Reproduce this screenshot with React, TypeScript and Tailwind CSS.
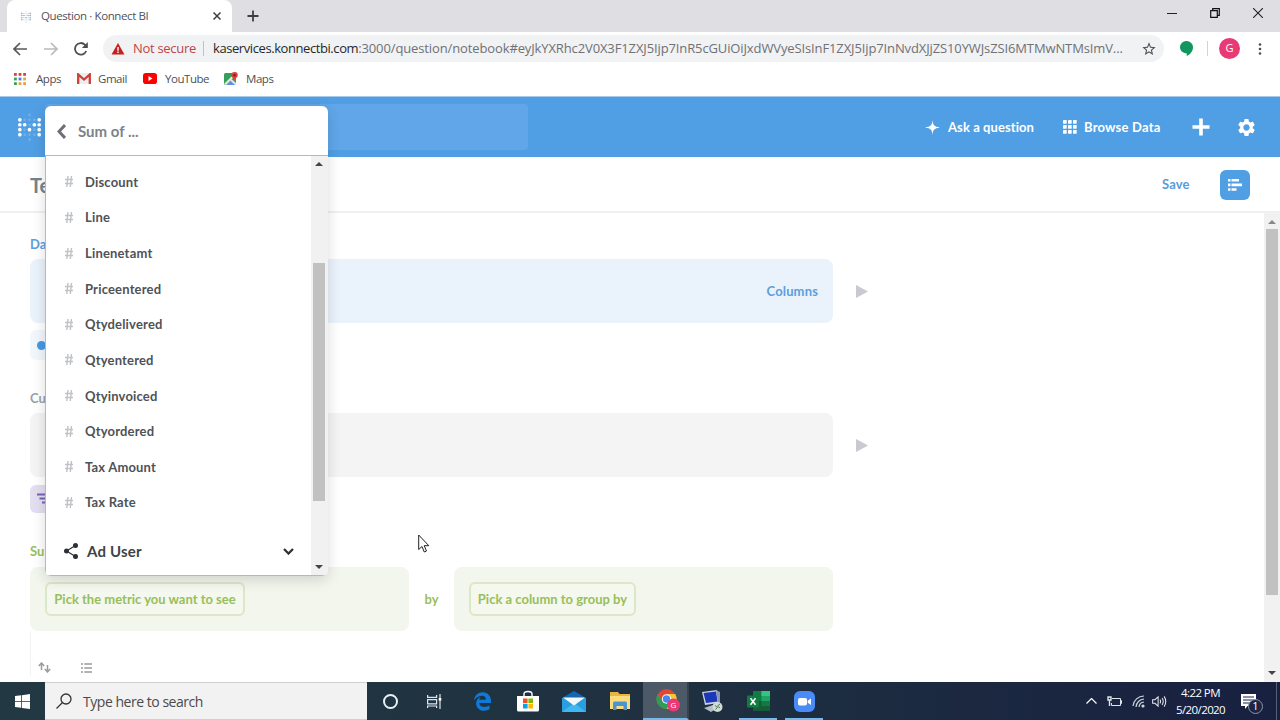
import type { ReactNode } from "react";
import { FaEdgeLegacy } from "react-icons/fa";
import { MdSettings, MdStarBorder } from "react-icons/md";

const columns = ["Discount", "Line", "Linenetamt", "Priceentered", "Qtydelivered", "Qtyentered", "Qtyinvoiced", "Qtyordered", "Tax Amount", "Tax Rate"];

const logoRows = ["..o..", "#ooo#", "##o##", "#o#o#", "#ooo#", "..o.."];

function Logo({ bright, dim, className }: { bright: string; dim: string; className: string }) {
  return (
    <svg viewBox="0 0 24 31" className={className}>
      {logoRows.flatMap((row, r) =>
        row.split("").map((c, i) =>
          c === "." ? null : (
            <circle key={`${r}-${i}`} cx={2 + i * 5} cy={3 + r * 5.1} r={c === "#" ? 1.9 : 1.4} fill={c === "#" ? bright : dim} />
          ),
        ),
      )}
    </svg>
  );
}

function TabStrip() {
  return (
    <div className="flex h-8 items-stretch bg-[#dedee3]">
      <div className="ml-[7px] flex w-[225px] items-center rounded-t-lg bg-white pl-[13px]">
        <Logo bright="#8fa9c4" dim="#b9cfe4" className="h-[13px] w-3" />
        <span className="ml-[9px] w-[160px] whitespace-nowrap text-[11.5px] tracking-[-0.4px] text-[#505257]">Question · Konnect BI</span>
        <svg viewBox="0 0 8 8" className="ml-[12px] size-2 stroke-[#3c3f43]" strokeWidth="1.500"><path d="M.5.5l7 7M7.500.5l-7 7" /></svg>
      </div>
      <div className="flex w-[42px] items-center justify-center">
        <svg viewBox="0 0 12 12" className="size-3 stroke-[#3c3f43]" strokeWidth="1.800"><path d="M6 .5v11M.5 6h11" /></svg>
      </div>
      <div className="ml-auto mr-[17px] flex items-center gap-[33px] pb-[6px]">
        <svg viewBox="0 0 10 10" className="size-[10px] stroke-[#222]" strokeWidth="1"><path d="M0 5.500h10" /></svg>
        <svg viewBox="0 0 10 10" className="size-[10px] fill-none stroke-[#111]" strokeWidth="1.200"><path d="M.7 2.700h6.600v6.600H.7zM2.700 2.700V.7h6.600v6.600h-2" /></svg>
        <svg viewBox="0 0 10 10" className="size-[10px] stroke-[#222]" strokeWidth="1.100"><path d="M0 0l10 10M10 0L0 10" /></svg>
      </div>
    </div>
  );
}

function AddressBar() {
  return (
    <div className="flex h-[33px] items-center pl-[13px]">
      <svg viewBox="0 0 14 14" className="size-[14px] fill-none stroke-[#55585c]" strokeWidth="1.700"><path d="M14 7H1.400M7 1L1 7l6 6" /></svg>
      <svg viewBox="0 0 14 14" className="ml-[17px] size-[14px] fill-none stroke-[#b9bbbe]" strokeWidth="1.700"><path d="M0 7h12.600M7 1l6 6-6 6" /></svg>
      <svg viewBox="0 0 14 14" className="ml-4 size-[14px] fill-none stroke-[#4c4f53]" strokeWidth="1.800"><path d="M12.200 9A5.800 5.800 0 1 1 11 2.800l1.800 1.800" /><path d="M13.800 0v5.900H7.900z" className="fill-[#4c4f53] stroke-none" /></svg>
      <div className="ml-[15px] flex h-[27px] w-[1061px] items-center rounded-full bg-[#f1f2f4] pl-[8px]">
        <svg viewBox="0 0 14 13" className="h-[12px] w-[14px]"><path d="M7 0l7 12.500H0z" className="fill-[#c5221f]" /><path d="M7 4.300v4M7 9.300v1.600" className="stroke-white" strokeWidth="1.500" /></svg>
        <span className="ml-2 w-[70px] whitespace-nowrap text-[13px] tracking-[-0.3px] text-[#c0444a]">Not secure</span>
        <span className="mr-[9px] h-[15px] w-px bg-[#bfc1c5]" />
        <span className="w-[924px] whitespace-nowrap text-[13px] text-[#6f7175]">
          <span className="tracking-[-0.42px] text-[#26282b]">kaservices.konnectbi.com</span>
          <span className="tracking-[-0.12px]">:3000/question/notebook#eyJkYXRhc2V0X3F1ZXJ5Ijp7InR5cGUiOiJxdWVyeSIsInF1ZXJ5Ijp7InNvdXJjZS10YWJsZSI6MTMwNTMsImV...</span>
        </span>
        <MdStarBorder className="ml-[4px] size-4 text-[#4c4f53]" />
      </div>
      <svg viewBox="0 0 13 15" className="ml-4 h-[15px] w-[13px] fill-[#12965f]"><path d="M6.500 0A6.300 6.300 0 0 0 0 6.300c0 3.400 2.800 6 6.700 6V15C10.500 13.300 13 10 13 6.300A6.400 6.400 0 0 0 6.500 0z" /></svg>
      <span className="ml-[14px] h-[15px] w-px bg-[#d2d3d6]" />
      <span className="ml-[11px] flex size-[21px] items-center justify-center rounded-full bg-[#e93a76] text-[11px] text-white">G</span>
      <svg viewBox="0 0 4 12" className="ml-[18px] h-3 w-1 fill-[#4c4f53]"><circle cx="2" cy="1.500" r="1.300" /><circle cx="2" cy="6" r="1.300" /><circle cx="2" cy="10.500" r="1.300" /></svg>
    </div>
  );
}

const appDots = ["#d6453d", "#d6453d", "#d6453d", "#3f9b57", "#4a7fd6", "#e8a33a", "#3f9b57", "#e8a33a", "#e8a33a"];

function Bookmarks() {
  const label = "whitespace-nowrap text-[11.5px] tracking-[-0.45px] text-[#4d4f53]";
  return (
    <div className="flex h-[31px] items-center pb-[4px] pl-[14px]">
      <svg viewBox="0 0 12 12" className="size-3">{appDots.map((c, i) => <rect key={i} x={(i % 3) * 4.6} y={Math.floor(i / 3) * 4.6} width="2.800" height="2.800" fill={c} />)}</svg>
      <span className={`${label} ml-[10px] w-[41px]`}>Apps</span>
      <svg viewBox="0 0 14 11" className="h-[11px] w-[14px]"><path d="M0 0h14v11H0z" className="fill-[#eee]" /><path d="M1.200 11V1.500L7 6.500l5.800-5V11" className="fill-none stroke-[#cf3f36]" strokeWidth="2.300" /></svg>
      <span className={`${label} ml-[7px] w-[45px]`}>Gmail</span>
      <svg viewBox="0 0 14 11" className="h-[11px] w-[14px]"><rect width="14" height="11" rx="2.800" className="fill-[#f00]" /><path d="M5.500 3l4 2.500-4 2.500z" className="fill-white" /></svg>
      <span className={`${label} ml-2 w-[59px]`}>YouTube</span>
      <svg viewBox="0 0 14 14" className="size-[14px]">
        <rect y="1" width="12" height="12" rx="1.500" className="fill-[#35a05a]" />
        <path d="M1 13l6-6 5 5.500-.5.5z" className="fill-[#5b8def]" /><path d="M0 12L10 2l1.500 1.500L2 13z" className="fill-[#f3e7c0]" /><path d="M6 8.500l1.500-1.500L12 11v2h-1z" className="fill-[#dfe3e8]" />
        <path d="M10.500 0A3.200 3.200 0 0 0 7.300 3.200C7.300 5.500 10 6 10.500 9c.5-3 3.300-3.500 3.300-5.800A3.200 3.200 0 0 0 10.500 0z" className="fill-[#dc4437]" /><circle cx="10.500" cy="3.200" r="1.200" className="fill-[#7e1f19]" />
      </svg>
      <span className={`${label} ml-2`}>Maps</span>
    </div>
  );
}

function NavBar() {
  return (
    <div className="flex h-[60px] items-center bg-[#509ee3] pl-[17px] text-[13px] font-bold text-white">
      <Logo bright="#ffffff" dim="#6fb0ea" className="h-[30px] w-[25px]" />
      <div className="ml-[3px] h-[46px] w-[483px] rounded bg-[#60a6e8]" />
      <svg viewBox="0 0 16 16" className="ml-[397px] size-[15px] fill-white"><path d="M8 0c.5 5.500 1.500 7 8 8-6.500 1-7.500 2.500-8 8-.5-5.500-1.500-7-8-8 6.500-1 7.500-2.500 8-8z" /></svg>
      <span className="ml-2 w-[115px] whitespace-nowrap pt-px tracking-[0.08px]">Ask a question</span>
      <svg viewBox="0 0 14 14" className="size-[14px] fill-white">{[0, 5, 10].flatMap((y) => [0, 5, 10].map((x) => <rect key={`${x}-${y}`} x={x} y={y} width="3.700" height="3.700" rx=".4" />))}</svg>
      <span className="ml-[7px] w-[108px] whitespace-nowrap pt-px tracking-[0.2px]">Browse Data</span>
      <svg viewBox="0 0 18 18" className="size-[18px] stroke-white" strokeWidth="3.600"><path d="M9 .5v17M.5 9h17" /></svg>
      <MdSettings className="ml-[26px] size-[21px]" />
    </div>
  );
}

function TitleBar() {
  return (
    <div className="flex h-[56px] items-center border-b-2 border-[#f0f0f1] pl-[30px] pt-px font-bold">
      <span className="w-[1132px] text-[20px] text-[#74838f]">Te</span>
      <span className="w-[58px] pt-px text-[13px] tracking-[0.1px] text-[#5b9bd8]">Save</span>
      <span className="flex size-[30px] items-center justify-center rounded-md bg-[#509ee3]">
        <svg viewBox="0 0 14 12" className="h-3 w-[14px] fill-white"><path d="M0 0h2.500v2.600H0zM3.500 0H11v2.600H3.500zM0 4.600h2.500v2.600H0zM3.500 4.600H14v2.600H3.500zM0 9.200h2.500v2.600H0zM3.500 9.200h5v2.600h-5z" /></svg>
      </span>
    </div>
  );
}

function Preview() {
  return <svg viewBox="0 0 12 13" className="ml-[23px] h-[13px] w-3 fill-[#c8c9d2]"><path d="M0 0l12 6.500L0 13z" /></svg>;
}

function PickButton({ children, width }: { children: ReactNode; width: string }) {
  return <span className={`flex h-[34px] items-center justify-center whitespace-nowrap rounded-md border-2 border-[#dbe7c9] bg-[#f4f8ee] pt-px text-[#98bf5b] ${width}`}>{children}</span>;
}

function Notebook() {
  return (
    <div className="flex min-w-0 grow flex-col overflow-hidden pl-[30px] pt-[21px] text-[13px] font-bold">
      <div className="h-5 leading-5 text-[#5b9fdc]">Da</div>
      <div className="mt-[5px] flex items-center">
        <div className="flex h-[64px] w-[803px] items-center justify-end rounded-lg bg-[#eaf2fb] pr-[15px] pt-0.5 tracking-[0.15px] text-[#5b9fdc]">Columns</div>
        <Preview />
      </div>
      <div className="mt-[7px] flex h-[30px] w-[60px] items-center rounded-md bg-[#f2f7fd] pl-[7px]">
        <span className="size-[9px] rounded-full bg-[#4798e6]" />
      </div>
      <div className="mt-[28px] h-5 leading-5 text-[#9aa1a8]">Cu</div>
      <div className="mt-[5px] flex items-center">
        <div className="h-[64px] w-[803px] rounded-lg bg-[#f4f4f4]" />
        <Preview />
      </div>
      <div className="mt-2 flex h-[28px] w-[60px] items-center rounded-md bg-[#e3dff0] pl-[7px]">
        <svg viewBox="0 0 14 12" className="h-3 w-[14px] stroke-[#7863b5]" strokeWidth="2"><path d="M0 1.500h14M2.500 5.500h9M5 9.500h4" /></svg>
      </div>
      <div className="mt-[28px] h-5 leading-5 text-[#98bf5b]">Su</div>
      <div className="mt-[6px] flex items-center">
        <div className="flex h-[64px] w-[379px] items-center rounded-lg bg-[#f2f6ed] pl-[15px]"><PickButton width="w-[200px]">Pick the metric you want to see</PickButton></div>
        <span className="w-[45px] pt-px text-center text-[#98bf5b]">by</span>
        <div className="flex h-[64px] w-[379px] items-center rounded-lg bg-[#f2f6ed] pl-[15px]"><PickButton width="w-[167px]">Pick a column to group by</PickButton></div>
      </div>
      <div className="flex h-[45px] items-end gap-[30px] border-l border-[#f3f3f3] pb-[3px] pl-[7px]">
        <svg viewBox="0 0 13 11" className="h-[11px] w-[13px] fill-none stroke-[#989ba0]" strokeWidth="1.500"><path d="M3.500 8V1.500M.8 4l2.700-3 2.700 3M9.500 3v6.500M6.800 7l2.700 3 2.700-3" /></svg>
        <svg viewBox="0 0 11 10" className="h-[10px] w-[11px] stroke-[#989ba0]" strokeWidth="1.700"><path d="M0 1h2M3.300 1H11M0 5h2M3.300 5H11M0 9h2M3.300 9H11" /></svg>
      </div>
    </div>
  );
}

function Arrow({ down, className }: { down?: boolean; className: string }) {
  return <svg viewBox="0 0 8 4" className={`h-1 w-2 ${className}`}><path d={down ? "M0 0h8L4 4z" : "M0 4h8L4 0z"} /></svg>;
}

function PageScrollbar() {
  return (
    <div className="flex w-4 flex-col items-center bg-[#f1f1f1]">
      <Arrow className="mt-[7px] fill-[#888]" />
      <div className="mt-[5px] h-[366px] w-3 bg-[#c1c1c1]" />
      <Arrow down className="mb-[7px] mt-auto fill-[#444]" />
    </div>
  );
}

function ColumnPicker() {
  return (
    <div className="absolute left-[45px] top-[106px] flex h-[470px] w-[283px] flex-col overflow-hidden rounded-md bg-white font-['Lato',sans-serif] shadow-[0_4px_14px_rgba(0,0,0,0.14)]">
      <div className="flex h-[49px] items-center pl-[12px] pt-[2px] text-[#7c8389]">
        <svg viewBox="0 0 9 15" className="h-[15px] w-[9px] fill-none stroke-[#6d7175]" strokeWidth="3"><path d="M8 1L2 7.500 8 14" /></svg>
        <span className="ml-[12px] text-[15px] font-bold">Sum of ...</span>
      </div>
      <div className="flex min-h-0 grow border border-r-0 border-[#a3b9e6]">
        <div className="flex min-w-0 grow flex-col pt-2">
          {columns.map((name) => (
            <div key={name} className="flex h-[35.640px] items-center pl-[19px] text-[13px] font-bold text-[#4f5256]">
              <svg viewBox="0 0 8 11" className="h-[11px] w-2 stroke-[#bfc2c7]" strokeWidth="1.400"><path d="M3 0L1.800 11M6.500 0L5.300 11M0 3.500h8M0 7.500h8" /></svg>
              <span className="ml-[12px] pt-[1.500px] tracking-[0.18px]">{name}</span>
            </div>
          ))}
          <div className="mt-[13px] flex h-[36px] items-center pl-[18px] pr-[17px] text-[15px] font-bold text-[#3f4347]">
            <svg viewBox="0 0 14 16" className="h-4 w-[14px] fill-[#2e3236] stroke-[#2e3236]" strokeWidth="1.200"><path d="M11.500 2.500L2.500 8l9 5.500" fill="none" /><circle cx="11.500" cy="2.500" r="1.900" /><circle cx="2.500" cy="8" r="1.900" /><circle cx="11.500" cy="13.500" r="1.900" /></svg>
            <span className="ml-[9px] grow tracking-[0.2px]">Ad User</span>
            <svg viewBox="0 0 11 7" className="h-[7px] w-[11px] fill-none stroke-[#2e3236]" strokeWidth="2.300"><path d="M1 1l4.500 4.500L10 1" /></svg>
          </div>
        </div>
        <div className="flex w-[17px] flex-col items-center bg-[#f1f1f1] pr-[2px]">
          <Arrow className="mt-[6px] fill-[#444]" />
          <div className="mt-[97px] h-[238px] w-3 bg-[#c1c1c1]" />
          <Arrow down className="mb-[6px] mt-auto fill-[#444]" />
        </div>
      </div>
    </div>
  );
}

function Cell({ children, className = "" }: { children: ReactNode; className?: string }) {
  return <div className={`flex h-full w-[46px] items-center justify-center ${className}`}>{children}</div>;
}

function Taskbar() {
  return (
    <div className="flex h-[38px] items-center bg-linear-to-r from-[#223842] via-[#1f3140] to-[#182040]">
      <div className="flex w-[45px] justify-center">
        <svg viewBox="0 0 16 16" className="size-[15px] fill-white"><path d="M0 2.200L6.600 1.300v6.200H0zM7.400 1.200L16 0v7.500H7.400zM0 8.300h6.600v6.400L0 13.800zM7.400 8.300H16V16l-8.600-1.200z" /></svg>
      </div>
      <div className="flex h-full w-[322px] items-center border-y border-[#cfcfcf] bg-[#f2f2f2] pl-[11px]">
        <svg viewBox="0 0 16 16" className="size-4 fill-none stroke-[#333]" strokeWidth="1.300"><circle cx="10" cy="6" r="5" /><path d="M6.500 9.500L.5 15.500" /></svg>
        <span className="ml-[11px] text-[14px] tracking-[-0.47px] text-[#4a4a4a]">Type here to search</span>
      </div>
      <Cell><span className="size-[15px] rounded-full border-2 border-[#e8f0f4]" /></Cell>
      <Cell><svg viewBox="0 0 15 15" className="-ml-[3px] size-[15px] fill-none stroke-[#dfe6ea]" strokeWidth="1.200"><path d="M.6 1v2.400h9V1M.6 5.600h9v4.200h-9zM.6 14v-2h9v2M13 0v15" /><path d="M11.700 4h2.600v2.600h-2.600z" className="fill-white stroke-none" /></svg></Cell>
      <Cell><FaEdgeLegacy className="size-[19px] text-[#0f79d8]" /></Cell>
      <Cell>
        <svg viewBox="0 0 22 22" className="size-[22px]"><path d="M7 7V4q0-2.500 4-2.500T15 4v3" className="fill-none stroke-white" strokeWidth="1.400" /><path d="M0 6h22v14q0 1.500-1.500 1.500h-19Q0 21.500 0 20z" className="fill-white" /><path d="M6 8.500h4.600v4.600H6z" className="fill-[#f05022]" /><path d="M11.400 8.500H16v4.600h-4.600z" className="fill-[#7fba00]" /><path d="M6 13.900h4.600v4.600H6z" className="fill-[#00a4ef]" /><path d="M11.400 13.900H16v4.600h-4.600z" className="fill-[#ffb900]" /></svg>
      </Cell>
      <Cell>
        <svg viewBox="0 0 24 21" className="h-[21px] w-6"><path d="M0 7l12-7 12 7v3H0z" className="fill-[#1467b0]" /><path d="M0 7h24v14H0z" className="fill-[#2a9fe0]" /><path d="M0 21l12-9 12 9z" className="fill-[#41b8f0]" /><path d="M1 6.500h22L12 14.500z" className="fill-[#f4f8fb]" /></svg>
      </Cell>
      <Cell>
        <svg viewBox="0 0 20 18" className="h-[18px] w-5"><path d="M0 0h8l1.500 2H20v15H0z" className="fill-[#e9b440]" /><path d="M0 4h20v13H0z" className="fill-[#fbdc7d]" /><path d="M3 18v-7q0-1.500 1.500-1.500h11Q17 9.500 17 11v7h-3.500v-4h-7v4z" className="fill-[#4a95cf]" /></svg>
      </Cell>
      <div className="flex h-full w-[46px] items-center justify-center border-b-2 border-r-2 border-b-[#76b9ed] border-r-[#36434f] bg-[#4b5a66]">
        <svg viewBox="0 0 24 24" className="ml-[5px] size-6">
          <circle cx="10.500" cy="11" r="10" className="fill-[#e2463b]" /><path d="M1.800 6a10 10 0 0 0 8.700 15l4.300-7.500H6.200z" className="fill-[#2f9e54]" /><path d="M10.500 21a10 10 0 0 0 8.700-15h-8.700l4.300 7.500z" className="fill-[#f8c935]" />
          <circle cx="10.500" cy="11" r="4.700" className="fill-white" /><circle cx="10.500" cy="11" r="3.700" className="fill-[#4688f1]" />
          <circle cx="17.500" cy="17" r="6.500" className="fill-[#e93a76]" /><text x="17.500" y="20" textAnchor="middle" className="fill-white text-[8px]">G</text>
        </svg>
      </div>
      <Cell>
        <svg viewBox="0 0 22 23" className="h-[23px] w-[22px]"><path d="M1 2l15-2 2 13-14 2z" className="fill-[#c9d3e4]" /><path d="M2.500 3l12.500-1.500 1.500 10L5 13z" className="fill-[#1c38b8]" /><path d="M15 0l4 2v13l-2-2z" className="fill-[#8a97b0]" /><path d="M3 18l9-3 6 2-8 5z" className="fill-[#b5bdc8]" /><circle cx="16.500" cy="17" r="5" className="fill-[#d3dbd6]" /><path d="M14 15.500l2.500 2-2 2M19 14l-2.500 2 2.500 2" className="fill-none stroke-[#4c7a52]" /></svg>
      </Cell>
      <Cell className="relative">
        <svg viewBox="0 0 23 20" className="h-5 w-[23px]"><path d="M6 0h17v20H6z" className="fill-[#21a366]" /><path d="M6 0h8.500v10H6z" className="fill-[#107c41]" /><path d="M14.500 0H23v5h-8.500z" className="fill-[#33c481]" /><path d="M6 10h17v10H6z" className="fill-[#185c37]" /><path d="M14.500 10H23v5h-8.500z" className="fill-[#107c41]" /><rect y="4.500" width="12" height="12" rx="1" className="fill-[#107c41]" /><path d="M3.500 7.300l5 6.500M8.500 7.300l-5 6.500" className="stroke-white" strokeWidth="1.600" /></svg>
        <span className="absolute bottom-0 h-0.5 w-[38px] bg-[#76b9ed]" />
      </Cell>
      <Cell className="relative">
        <svg viewBox="0 0 21 21" className="size-[21px]"><rect width="21" height="21" rx="6" className="fill-[#4a8cf7]" /><rect x="4" y="7" width="9" height="7.500" rx="1.800" className="fill-white" /><path d="M13.700 9.700L17 7.500v6.500l-3.300-2.200z" className="fill-white" /></svg>
        <span className="absolute bottom-0 h-0.5 w-[38px] bg-[#76b9ed]" />
      </Cell>
      <div className="ml-auto flex h-full items-center text-white">
        <svg viewBox="0 0 11 6" className="h-[6px] w-[11px] fill-none stroke-white" strokeWidth="1.200"><path d="M.5 5.500l5-5 5 5" /></svg>
        <svg viewBox="0 0 15 11" className="ml-[10px] h-[11px] w-[15px] fill-none stroke-[#dfe3ea]" strokeWidth="1"><path d="M5 2.500h8.500v7h-9V7M13.500 4.500h1v3h-1" /><path d="M1 1h3v3H1zM2.500 4v6" strokeWidth="1.400" /></svg>
        <svg viewBox="0 0 13 13" className="ml-[10px] size-[13px] fill-none stroke-[#cfd5df]" strokeWidth="1.200"><path d="M1 11A11 11 0 0 1 12 1M4 12A8.500 8.500 0 0 1 12 4M7 12A5.500 5.500 0 0 1 12 7" /><circle cx="11" cy="11" r="1" className="fill-white" /></svg>
        <svg viewBox="0 0 16 14" className="ml-[7px] h-[13px] w-[15px] fill-none stroke-[#e6e9ef]" strokeWidth="1.100"><path d="M.6 5h2.500l3.400-3v10L3.100 9H.6zM8.500 5q1.300 2 0 4M10.800 3.300q2.400 3.700 0 7.400M13 1.500q3.500 5.500 0 11" /></svg>
        <div className="ml-[9px] w-[49px] whitespace-nowrap text-center text-[11.5px] leading-[17px] tracking-[-0.600px]"><div>4:22 PM</div><div>5/20/2020</div></div>
        <div className="relative ml-[16px] mr-[15px] flex w-5 items-center">
          <svg viewBox="0 0 15 15" className="size-[15px]"><path d="M0 0h15v12H6.500L4 15v-3H0z" className="fill-white" /><path d="M2 3h11M2 6h11M2 9h7" className="stroke-[#1b2444]" strokeWidth="1.200" /></svg>
          <span className="absolute left-[7px] top-[5px] flex size-[15px] items-center justify-center rounded-full border border-[#8d93a5] bg-[#1b2444] text-[11px]">1</span>
        </div>
        <span className="mr-[3px] h-full w-px bg-[#59617a]" />
      </div>
    </div>
  );
}

export default function App() {
  return (
    <div className="relative flex h-[720px] w-[1280px] flex-col overflow-hidden bg-white font-['Open_Sans',sans-serif]">
      <TabStrip />
      <AddressBar />
      <Bookmarks />
      <div className="flex min-h-0 grow flex-col border-t border-[#a9c9e8] font-['Lato',sans-serif]">
        <NavBar />
        <TitleBar />
        <div className="flex min-h-0 grow">
          <Notebook />
          <PageScrollbar />
        </div>
      </div>
      <Taskbar />
      <ColumnPicker />
      <svg viewBox="0 0 12 19" className="absolute left-[418px] top-[534px] h-[19px] w-3 fill-white stroke-[#222]" strokeWidth="1"><path d="M.7 1v14.500l3.300-3 2.300 5.500 2.200-1-2.300-5.300h4.600z" /></svg>
    </div>
  );
}
